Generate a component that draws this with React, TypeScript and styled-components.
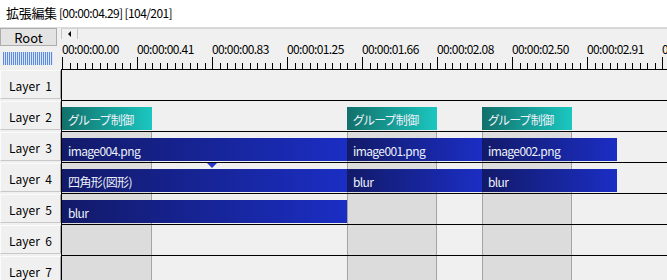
import React from "react";
import styled, { createGlobalStyle } from "styled-components";

const GlobalStyle = createGlobalStyle`
  html, body {
    margin: 0;
    padding: 0;
    background: #f0f0f0;
  }
  body {
    font-family: "Noto Sans CJK JP", "Noto Sans", sans-serif;
  }
`;

const STEP = 75; // px per labelled ruler step

const Window = styled.div`
  width: 667px;
  height: 280px;
  overflow: hidden;
  background: #f0f0f0;
  color: #000;
  font-size: 12px;
`;

const TitleBar = styled.div`
  height: 25px;
  padding: 0 0 2px 6px;
  background: #fff;
  border-bottom: 1px solid #dadada;
  display: flex;
  align-items: center;
  white-space: pre;
`;

const TitleName = styled.span`
  font-size: 13px;
  letter-spacing: -0.3px;
`;

const TitleInfo = styled.span`
  font-size: 12px;
  letter-spacing: -0.6px;
`;

const Header = styled.div`
  display: grid;
  grid-template-columns: 61px 1fr;
  height: 41px;
`;

const HeaderLeft = styled.div`
  display: flex;
  flex-direction: column;
`;

const RootButton = styled.div`
  width: 55px;
  height: 16px;
  border: 1px solid #adadad;
  background: #e3e3e3;
  display: flex;
  align-items: center;
  justify-content: center;
  font-size: 13px;
`;

const Meter = styled.div`
  width: 50px;
  height: 13px;
  margin: 6px 0 0 3px;
  background: repeating-linear-gradient(
    90deg,
    #5a8be0 0 1px,
    #dbe5f6 1px 2px
  );
`;

const HeaderRight = styled.div`
  display: flex;
  flex-direction: column;
  min-width: 0;
`;

const ScrollBar = styled.div`
  height: 10px;
  border-top: 1px solid #d4d4d4;
  display: flex;
`;

const ScrollArrow = styled.div`
  width: 15px;
  border-left: 1px solid #c4c4c4;
  border-right: 1px solid #c4c4c4;
  display: flex;
  align-items: center;
  justify-content: center;

  &::before {
    content: "";
    border-top: 3px solid transparent;
    border-bottom: 3px solid transparent;
    border-right: 3px solid #000;
  }
`;

const Ruler = styled.div`
  margin-left: 1px;
  display: flex;
  flex-direction: column;
  overflow: hidden;
`;

const RulerLabels = styled.div`
  height: 18px;
  display: flex;
  align-items: center;
`;

const RulerLabel = styled.span`
  flex: none;
  width: ${STEP}px;
  white-space: nowrap;
  font-size: 12px;
  letter-spacing: -0.6px;
`;

const Ticks = styled.svg`
  display: block;
`;

const LayerRow = styled.div`
  display: grid;
  grid-template-columns: 61px 1fr;
  height: 31px;
`;

const LabelCell = styled.div`
  padding-top: 1px;
`;

const LayerLabel = styled.div`
  box-sizing: border-box;
  height: 29px;
  border: 1px solid #c8c8c8;
  border-top-color: #fbfbfb;
  border-left-color: #fbfbfb;
  border-right-color: #a8a8a8;
  display: flex;
  align-items: center;
  justify-content: center;
  white-space: pre;
  font-size: 12px;
  padding-top: 1px;
`;

const Track = styled.div`
  position: relative;
  border-top: 1px solid #000;
  border-left: 1px solid #000;
  background: #f0f0f0;
  overflow: hidden;
`;

const Shade = styled.div<{ $left: number; $edge: boolean }>`
  position: absolute;
  top: 0;
  bottom: 0;
  left: ${(p) => p.$left}px;
  width: 90px;
  box-sizing: border-box;
  background: #dcdcdc;
  border-right: 1px solid #a4a4a4;
  border-left: ${(p) => (p.$edge ? "none" : "1px solid #a4a4a4")};
`;

const Clip = styled.div<{ $left: number; $width: number; $kind: "object" | "group" }>`
  position: absolute;
  top: 6px;
  left: ${(p) => p.$left}px;
  width: ${(p) => p.$width}px;
  height: 23px;
  box-sizing: border-box;
  padding: 1px 0 0 6px;
  display: flex;
  align-items: center;
  color: #eef1fa;
  font-size: 12px;
  white-space: nowrap;
  overflow: hidden;
  letter-spacing: ${(p) => (p.$kind === "group" ? "-0.4px" : "-0.6px")};
  font-feature-settings: ${(p) => (p.$kind === "group" ? '"palt"' : "normal")};
  background: ${(p) =>
    p.$kind === "group"
      ? "linear-gradient(to right, #12706a, #1bc7c0)"
      : "linear-gradient(to right, #121a68, #1b2ec4)"};
`;

const Marker = styled.div`
  position: absolute;
  top: 0;
  left: 145px;
  width: 0;
  height: 0;
  border-left: 5px solid transparent;
  border-right: 5px solid transparent;
  border-top: 5px solid #2434c8;
`;

type ClipData = { left: number; width: number; label: string; kind: "object" | "group" };

const groups = [0, 285, 420];

const layers: { clips: ClipData[]; shaded: boolean; marker?: boolean }[] = [
  { clips: [], shaded: false },
  {
    shaded: false,
    clips: groups.map((left) => ({ left, width: 90, label: "グループ制御", kind: "group" })),
  },
  {
    shaded: true,
    clips: [
      { left: 0, width: 285, label: "image004.png", kind: "object" },
      { left: 285, width: 135, label: "image001.png", kind: "object" },
      { left: 420, width: 135, label: "image002.png", kind: "object" },
    ],
  },
  {
    shaded: true,
    marker: true,
    clips: [
      { left: 0, width: 285, label: "四角形(図形)", kind: "object" },
      { left: 285, width: 135, label: "blur", kind: "object" },
      { left: 420, width: 135, label: "blur", kind: "object" },
    ],
  },
  { shaded: true, clips: [{ left: 0, width: 285, label: "blur", kind: "object" }] },
  { shaded: true, clips: [] },
  { shaded: true, clips: [] },
];

const rulerLabels = [
  "00:00:00.00",
  "00:00:00.41",
  "00:00:00.83",
  "00:00:01.25",
  "00:00:01.66",
  "00:00:02.08",
  "00:00:02.50",
  "00:00:02.91",
  "00:00:03.33",
];

const RulerTicks = () => {
  const ticks = [];
  for (let i = 0; i <= 81; i++) {
    const x = Math.ceil(i * 7.5);
    const major = i % 10 === 0;
    ticks.push(<rect key={i} x={x} y={major ? 0 : 6} width={1} height={major ? 12 : 6} fill="#000" />);
  }
  return (
    <Ticks width={610} height={12}>
      {ticks}
    </Ticks>
  );
};

const App = () => {
  return (
    <Window>
      <GlobalStyle />
      <TitleBar>
        <TitleName>拡張編集</TitleName>
        <TitleInfo> [00:00:04.29] [104/201]</TitleInfo>
      </TitleBar>
      <Header>
        <HeaderLeft>
          <RootButton>Root</RootButton>
          <Meter />
        </HeaderLeft>
        <HeaderRight>
          <ScrollBar>
            <ScrollArrow />
          </ScrollBar>
          <Ruler>
            <RulerLabels>
              {rulerLabels.map((t) => (
                <RulerLabel key={t}>{t}</RulerLabel>
              ))}
            </RulerLabels>
            <RulerTicks />
          </Ruler>
        </HeaderRight>
      </Header>
      {layers.map((layer, i) => (
        <LayerRow key={i}>
          <LabelCell>
            <LayerLabel>{`Layer  ${i + 1}`}</LayerLabel>
          </LabelCell>
          <Track>
            {layer.shaded &&
              groups.map((left) => <Shade key={left} $left={left} $edge={left === 0} />)}
            {layer.clips.map((c) => (
              <Clip key={c.left} $left={c.left} $width={c.width} $kind={c.kind}>
                {c.label}
              </Clip>
            ))}
            {layer.marker && <Marker />}
          </Track>
        </LayerRow>
      ))}
    </Window>
  );
};

export default App;
